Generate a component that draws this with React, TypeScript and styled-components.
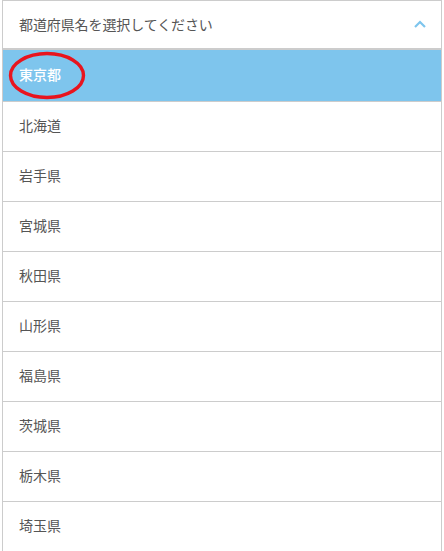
import React from "react";
import styled, { createGlobalStyle } from "styled-components";

const Global = createGlobalStyle`
  html, body { margin: 0; padding: 0; background: #fff; overflow: hidden; }
  body { font-family: "Noto Sans CJK JP", "Noto Sans", sans-serif; }
`;

const Page = styled.div`
  width: 444px;
  height: 551px;
  padding-left: 2px;
  box-sizing: border-box;
  overflow: hidden;
`;

const Panel = styled.div`
  width: 440px;
  border: 1px solid #cccccc;
  border-bottom: none;
  box-sizing: border-box;
  background: #fff;
`;

const Header = styled.div`
  height: 50px;
  display: flex;
  align-items: center;
  justify-content: space-between;
  padding: 0 14px 0 16px;
  border-bottom: 2px solid #cccccc;
  box-sizing: border-box;
  margin-top: -1px;
`;

const HeaderText = styled.span`
  font-size: 14px;
  color: #555555;
  letter-spacing: -0.1px;
`;

const Chevron = styled.svg`
  width: 14px;
  height: 10px;
`;

const List = styled.ul`
  list-style: none;
  margin: 0;
  padding: 0;
`;

const Row = styled.li<{ $active?: boolean }>`
  position: relative;
  height: ${(p) => (p.$active ? "52px" : "50px")};
  display: flex;
  align-items: center;
  padding-left: 16px;
  padding-bottom: 4px;
  box-sizing: border-box;
  border-bottom: 1px solid #cccccc;
  font-size: 14px;
  color: ${(p) => (p.$active ? "#ffffff" : "#555555")};
  background: ${(p) => (p.$active ? "#7ec5ed" : "#ffffff")};
  font-weight: ${(p) => (p.$active ? 500 : 400)};
`;

const Mark = styled.svg`
  position: absolute;
  left: 5px;
  top: 1px;
  width: 78px;
  height: 49px;
  pointer-events: none;
`;

const prefs = [
  "東京都",
  "北海道",
  "岩手県",
  "宮城県",
  "秋田県",
  "山形県",
  "福島県",
  "茨城県",
  "栃木県",
  "埼玉県",
];

export default function App() {
  return (
    <>
      <Global />
      <Page>
        <Panel>
          <Header>
            <HeaderText>都道府県名を選択してください</HeaderText>
            <Chevron viewBox="0 0 14 10">
              <path
                d="M2 8 L7 3 L12 8"
                fill="none"
                stroke="#7ec5ed"
                strokeWidth="2.2"
              />
            </Chevron>
          </Header>
          <List>
            {prefs.map((p, i) => (
              <Row key={p} $active={i === 0}>
                {p}
                {i === 0 && (
                  <Mark viewBox="0 0 78 49">
                    <ellipse
                      cx="39"
                      cy="24.5"
                      rx="36.5"
                      ry="22"
                      fill="none"
                      stroke="#e8141e"
                      strokeWidth="3.4"
                    />
                  </Mark>
                )}
              </Row>
            ))}
          </List>
        </Panel>
      </Page>
    </>
  );
}
